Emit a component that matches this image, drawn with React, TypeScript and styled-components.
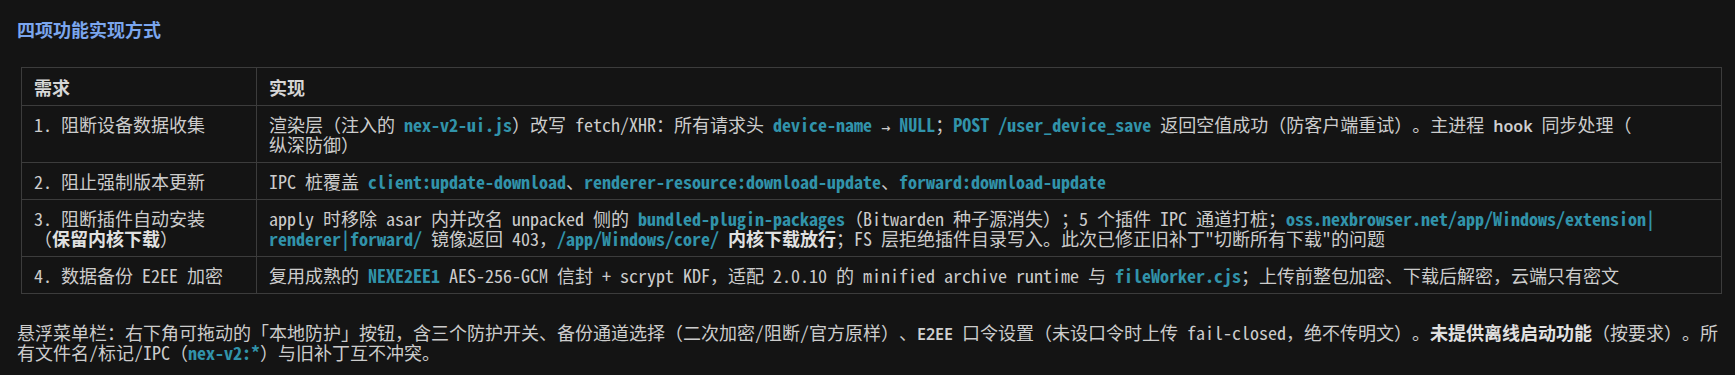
import * as React from "react";
import styled, { createGlobalStyle } from "styled-components";

const mono = `"Noto Sans Mono CJK SC", "Liberation Mono", "Noto Sans CJK SC", monospace`;

const GlobalStyle = createGlobalStyle`
  html, body {
    margin: 0;
    padding: 0;
    background: #141414;
  }
  body {
    font-family: ${mono};
    color: #cccccc;
    text-spacing-trim: space-all;
  }
`;

const Page = styled.div`
  padding: 19px 9px 0 17px;
  font-size: 18px;
  line-height: 20px;
`;

const Heading = styled.h3`
  margin: 0 0 28px 0;
  font-size: 18px;
  line-height: 20px;
  font-weight: bold;
  color: #7ba6ee;
`;

const Table = styled.table`
  margin: 0 4px;
  width: calc(100% - 8px);
  border-collapse: collapse;
  table-layout: fixed;
  border: 1px solid #3c3c3c;
`;

const Th = styled.th`
  border: 1px solid #3c3c3c;
  padding: 9px 12px 8px;
  text-align: left;
  font-weight: bold;
  color: #d6d6d6;
`;

const Td = styled.td`
  border: 1px solid #3c3c3c;
  padding: 8px 12px;
  vertical-align: top;
  color: #cccccc;
`;

const Code = styled.code`
  font-family: ${mono};
  font-weight: bold;
  color: #3193aa;
`;

const Strong = styled.strong`
  font-weight: bold;
  color: #e0e0e0;
`;

const Sans = styled.span`
  font-family: "Noto Sans", "Noto Sans CJK SC", sans-serif;
  font-weight: 600;
  font-size: 16px;
  line-height: 1;
  color: #d0d0d0;
`;

const Arrow = styled.span`
  font-family: "DejaVu Sans", sans-serif;
  font-size: 11px;
  font-weight: bold;
  line-height: 1;
`;

const Paragraph = styled.p`
  margin: 28px 0 0 0;
  color: #cccccc;
`;

interface IRow {
  need: React.ReactNode;
  impl: React.ReactNode;
}

const getRows = (): IRow[] => [
  {
    need: "1. 阻断设备数据收集",
    impl: (
      <>
        渲染层（注入的 <Code>nex-v2-ui.js</Code>）改写 fetch/XHR：所有请求头{" "}
        <Code>device-name</Code> <Arrow>→</Arrow> <Code>NULL</Code>；
        <Code>POST /user_device_save</Code> 返回空值成功（防客户端重试）。主进程 <Sans>hook</Sans>{" "}
        同步处理（
        <br />
        纵深防御）
      </>
    ),
  },
  {
    need: "2. 阻止强制版本更新",
    impl: (
      <>
        IPC 桩覆盖 <Code>client:update-download</Code>、<Code>renderer-resource:download-update</Code>、
        <Code>forward:download-update</Code>
      </>
    ),
  },
  {
    need: (
      <>
        3. 阻断插件自动安装
        <br />（<Strong>保留内核下载</Strong>）
      </>
    ),
    impl: (
      <>
        apply 时移除 asar 内并改名 unpacked 侧的 <Code>bundled-plugin-packages</Code>（Bitwarden
        种子源消失）；5 个插件 IPC 通道打桩；
        <Code>
          oss.nexbrowser.net/app/Windows/extension|<wbr />renderer|<wbr />forward/
        </Code>{" "}
        镜像返回 403，<Code>/app/Windows/core/</Code> <Strong>内核下载放行</Strong>；FS
        层拒绝插件目录写入。此次已修正旧补丁"切断所有下载"的问题
      </>
    ),
  },
  {
    need: "4. 数据备份 E2EE 加密",
    impl: (
      <>
        复用成熟的 <Code>NEXE2EE1</Code> AES-256-GCM 信封 + scrypt KDF，适配 2.0.10 的 minified
        archive runtime 与 <Code>fileWorker.cjs</Code>；上传前整包加密、下载后解密，云端只有密文
      </>
    ),
  },
];

export default function App() {
  const rows = getRows();
  return (
    <Page>
      <GlobalStyle />
      <Heading>四项功能实现方式</Heading>
      <Table>
        <colgroup>
          <col style={{ width: 235 }} />
          <col />
        </colgroup>
        <thead>
          <tr>
            <Th>需求</Th>
            <Th>实现</Th>
          </tr>
        </thead>
        <tbody>
          {rows.map((r, i) => (
            <tr key={i}>
              <Td>{r.need}</Td>
              <Td>{r.impl}</Td>
            </tr>
          ))}
        </tbody>
      </Table>
      <Paragraph>
        悬浮菜单栏：右下角可拖动的「本地防护」按钮，含三个防护开关、备份通道选择（二次加密/阻断/官方原样）、
        <Sans>E2EE</Sans> 口令设置（未设口令时上传 fail-closed，绝不传明文）。
        <Strong>未提供离线启动功能</Strong>（按要求）。所有文件名/标记/IPC（<Code>nex-v2:*</Code>）与旧补丁互不冲突。
      </Paragraph>
    </Page>
  );
}
